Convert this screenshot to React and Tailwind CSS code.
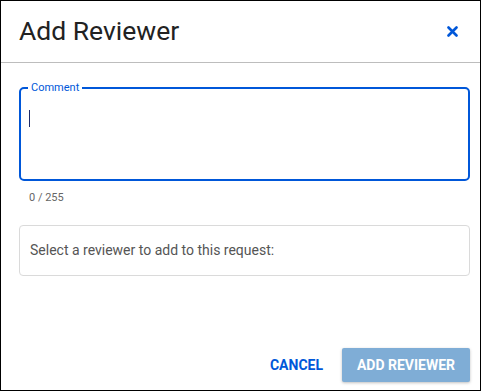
import React from 'react';

const BLUE = 'text-[#0057d9]';

export default function App() {
  return (
    <div className="flex h-[391px] w-[481px] flex-col border border-black bg-white font-['Roboto',sans-serif]">
      <div className="flex h-[62px] items-center justify-between border-b border-[#bdbdbd] pl-[18px] pr-[22px]">
        <h2 className="text-[26.5px] font-normal leading-none text-[#222]">Add Reviewer</h2>
        <button type="button" aria-label="Close" className={`${BLUE} p-0`}>
          <svg width="11" height="11" viewBox="0 0 11 11" fill="none" stroke="currentColor" strokeWidth="2.6" strokeLinecap="round">
            <path d="M1.5 1.5l8 8M9.5 1.5l-8 8" />
          </svg>
        </button>
      </div>

      <div className="flex flex-1 flex-col pl-[18px] pr-[10px] pt-[24px]">
        <div className="relative h-[94px] rounded-[5px] border-2 border-[#0057d9] pl-[8px] pt-[21px]">
          <span className={`absolute -top-[8px] left-[7px] bg-white px-[3px] text-[11px] leading-[14px] ${BLUE}`}>Comment</span>
          <span className="block h-[17px] w-px bg-[#1b2a6b]" />
        </div>
        <p className="mt-[10px] pl-[10px] text-[11px] leading-[14px] text-[#666]">0 / 255</p>

        <div className="mt-[20px] flex h-[51px] items-center rounded-[4px] border border-[#dadada] px-[10px] text-[14px] text-[#555]">
          Select a reviewer to add to this request:
        </div>

        <div className="mt-auto flex items-center justify-end gap-[19px] pb-[8px]">
          <button type="button" className={`text-[14px] font-bold ${BLUE}`}>CANCEL</button>
          <button type="button" className="h-[34px] w-[128px] rounded-[2px] bg-[#7fadd6] text-[14px] font-bold text-white shadow-[0_1px_3px_rgba(0,0,0,0.25)]">
            ADD REVIEWER
          </button>
        </div>
      </div>
    </div>
  );
}
